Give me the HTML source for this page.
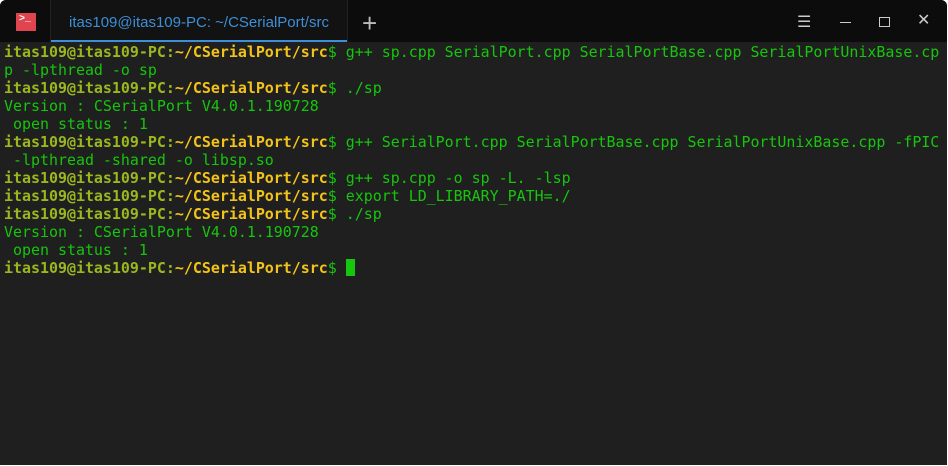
<!DOCTYPE html>
<html><head><style>
body{margin:0;width:948px;height:466px;background:#fff;overflow:hidden}
.win{position:absolute;left:0;top:0;width:947px;height:465px;background:#1f1f1f;border-radius:6px 6px 0 0;overflow:hidden}
.tb{position:absolute;left:0;top:0;width:947px;height:42px;background:#0c0c0c}
.icon{position:absolute;left:16px;top:13px;width:20px;height:18px;background:#e0454f;color:#fff;font:bold 10px "Liberation Mono",monospace;line-height:14px;padding-left:3px;box-sizing:border-box}
.tab{position:absolute;left:50px;top:0;width:296px;height:42px;background:#121212;border-right:1px solid #222;border-left:1px solid #222}
.tab span{position:absolute;left:0;right:0;top:14px;text-align:center;color:#3d8fd6;font:15px "Liberation Sans",sans-serif}
.tab i{position:absolute;left:0;right:0;bottom:0;height:2px;background:#3d8fd6}
.plus{position:absolute;left:362px;top:8px;color:#bbb;font:26px "Liberation Sans",sans-serif;font-weight:100}
.ctl{position:absolute;top:12px;color:#ccc;font:16px "Liberation Sans",sans-serif}
.term{position:absolute;left:4px;top:43px;font:14.95px/18px "DejaVu Sans Mono",monospace;color:#16c60c;white-space:pre}
.u{color:#9ab81e;font-weight:bold}.p{color:#f2c31a;font-weight:bold}
.cur{display:inline-block;width:9px;height:17px;background:#16c60c;vertical-align:top}
</style></head><body><div class="win">
<div class="tb">
<div class="icon">&gt;_</div>
<div class="tab"><span>itas109@itas109-PC: ~/CSerialPort/src</span><i></i></div>
<div class="plus">+</div>
<div class="ctl" style="left:797px">☰</div>
<div style="position:absolute;left:840px;top:22px;width:11px;height:1px;background:#ccc"></div>
<div style="position:absolute;left:879px;top:17px;width:9px;height:8px;border:1px solid #ccc"></div>
<div class="ctl" style="left:917px;top:10px">✕</div>
</div>
<div class="term"><span class="u">itas109@itas109-PC:</span><span class="p">~/CSerialPort/src</span>$ g++ sp.cpp SerialPort.cpp SerialPortBase.cpp SerialPortUnixBase.cp
p -lpthread -o sp
<span class="u">itas109@itas109-PC:</span><span class="p">~/CSerialPort/src</span>$ ./sp
Version : CSerialPort V4.0.1.190728
 open status : 1
<span class="u">itas109@itas109-PC:</span><span class="p">~/CSerialPort/src</span>$ g++ SerialPort.cpp SerialPortBase.cpp SerialPortUnixBase.cpp -fPIC
 -lpthread -shared -o libsp.so
<span class="u">itas109@itas109-PC:</span><span class="p">~/CSerialPort/src</span>$ g++ sp.cpp -o sp -L. -lsp
<span class="u">itas109@itas109-PC:</span><span class="p">~/CSerialPort/src</span>$ export LD_LIBRARY_PATH=./
<span class="u">itas109@itas109-PC:</span><span class="p">~/CSerialPort/src</span>$ ./sp
Version : CSerialPort V4.0.1.190728
 open status : 1
<span class="u">itas109@itas109-PC:</span><span class="p">~/CSerialPort/src</span>$ <span class="cur"></span></div>
</div></body></html>
